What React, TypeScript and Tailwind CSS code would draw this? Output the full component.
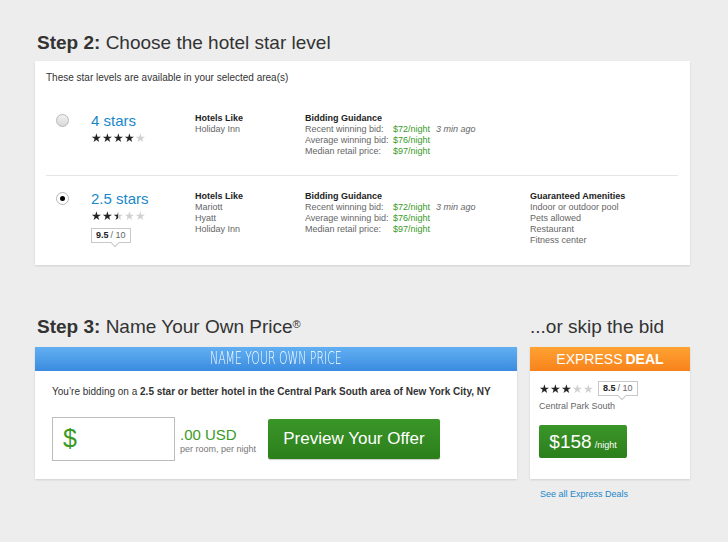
import React from "react";

const font = { fontFamily: '"Liberation Sans", Arial, sans-serif' };

function Stars({ value }: { value: number }) {
  return (
    <div className="flex h-[11px] items-center text-[12px] leading-none">
      {[0, 1, 2, 3, 4].map((i) => {
        const fill = Math.max(0, Math.min(1, value - i)) * 100;
        return (
          <span
            key={i}
            className="inline-block bg-clip-text text-transparent"
            style={{ backgroundImage: `linear-gradient(to right, #222 ${fill}%, #d0d0d0 ${fill}%)` }}
          >
            ★
          </span>
        );
      })}
    </div>
  );
}

function Score({ score }: { score: string }) {
  return (
    <div className="relative inline-flex h-[15px] items-center border border-[#c8c8c8] bg-white px-[4px] text-[9px] leading-none">
      <span className="font-bold text-[#222]">{score}</span>
      <span className="ml-[2px] text-[#666]">/ 10</span>
      <span className="absolute -bottom-[4px] left-[20px] h-[6px] w-[6px] rotate-45 border-b border-r border-[#c8c8c8] bg-white" />
    </div>
  );
}

function Radio({ checked }: { checked?: boolean }) {
  return (
    <div
      className={`flex h-[13px] w-[13px] items-center justify-center rounded-full border border-[#b8b8b8] ${
        checked ? "bg-white" : "bg-gradient-to-b from-[#f2f2f2] to-[#d8d8d8]"
      }`}
    >
      {checked ? <div className="h-[5px] w-[5px] rounded-full bg-black" /> : null}
    </div>
  );
}

function Guidance() {
  const rows = [
    ["Recent winning bid:", "$72/night", "3 min ago"],
    ["Average winning bid:", "$76/night", ""],
    ["Median retail price:", "$97/night", ""],
  ];
  return (
    <div className="text-[9px] leading-[11px]">
      <p className="font-bold text-[#222]">Bidding Guidance</p>
      {rows.map(([label, value, ago]) => (
        <div key={label} className="flex">
          <span className="w-[88px] text-[#666]">{label}</span>
          <span className="text-[#3a9a1f]">{value}</span>
          {ago ? <span className="ml-[6px] italic text-[#666]">{ago}</span> : null}
        </div>
      ))}
    </div>
  );
}

function StarRow({
  checked,
  label,
  value,
  hotels,
  score,
  amenities,
  className,
}: {
  checked?: boolean;
  label: string;
  value: number;
  hotels: string[];
  score?: string;
  amenities?: string[];
  className?: string;
}) {
  return (
    <div className={`grid grid-cols-[45px_104px_110px_225px_1fr] ${className ?? ""}`}>
      <div className="pl-[10px] pt-[1px]">
        <Radio checked={checked} />
      </div>
      <div>
        <p className="text-[15px] leading-[16px] text-[#1a87c9]">{label}</p>
        <div className="mt-[3px]">
          <Stars value={value} />
        </div>
        {score ? (
          <div className="mt-[7px] flex">
            <Score score={score} />
          </div>
        ) : null}
      </div>
      <div className="text-[9px] leading-[11px] text-[#666]">
        <p className="font-bold text-[#222]">Hotels Like</p>
        {hotels.map((h) => (
          <p key={h}>{h}</p>
        ))}
      </div>
      <div>
        <Guidance />
      </div>
      <div className="text-[9px] leading-[11px] text-[#666]">
        {amenities ? (
          <>
            <p className="font-bold text-[#222]">Guaranteed Amenities</p>
            {amenities.map((a) => (
              <p key={a}>{a}</p>
            ))}
          </>
        ) : null}
      </div>
    </div>
  );
}

export default function App() {
  return (
    <div className="min-h-[542px] w-[728px] bg-[#ededed] px-[35px] pt-[31px]" style={font}>
      <h2 className="pl-[2px] text-[19px] leading-[24px] text-[#333]">
        <span className="font-bold">Step 2:</span> Choose the hotel star level
      </h2>

      <section className="mt-[6px] h-[204px] w-[655px] bg-white px-[11px] pt-[10px] shadow-[0_1px_2px_rgba(0,0,0,0.12)]">
        <p className="text-[10px] leading-[13px] text-[#333]">These star levels are available in your selected area(s)</p>
        <div className="mr-[1px]">
          <StarRow
            className="h-[92px] border-b border-[#e6e6e6] pt-[29px]"
            label="4 stars"
            value={4}
            hotels={["Holiday Inn"]}
          />
          <StarRow
            className="pt-[15px]"
            checked
            label="2.5 stars"
            value={2.5}
            score="9.5"
            hotels={["Mariott", "Hyatt", "Holiday Inn"]}
            amenities={["Indoor or outdoor pool", "Pets allowed", "Restaurant", "Fitness center"]}
          />
        </div>
      </section>

      <div className="mt-[50px] flex gap-[13px]">
        <div className="w-[482px]">
          <h2 className="pl-[2px] text-[19px] leading-[24px] text-[#333]">
            <span className="font-bold">Step 3:</span> Name Your Own Price<sup className="text-[11px]">®</sup>
          </h2>
          <div className="mt-[8px] bg-white shadow-[0_1px_2px_rgba(0,0,0,0.12)]">
            <div className="flex h-[24px] items-center justify-center overflow-hidden bg-gradient-to-b from-[#62b0f2] to-[#3a8be0]">
              <span
                className="inline-block scale-x-[0.64] whitespace-nowrap text-[17px] text-white"
                style={{ fontFamily: '"DejaVu Sans", sans-serif', fontWeight: 300 }}
              >
                NAME YOUR OWN PRICE
              </span>
            </div>
            <div className="h-[108px] px-[17px] pt-[14px]">
              <p className="text-[10px] leading-[13px] text-[#333]">
                You’re bidding on a <b>2.5 star or better hotel in the Central Park South area of New York City, NY</b>
              </p>
              <div className="mt-[19px] flex items-start">
                <div className="flex h-[44px] w-[123px] items-center border border-[#bdbdbd] bg-white pl-[10px] text-[25px] text-[#3a9a1f]">
                  $
                </div>
                <div className="ml-[5px] w-[88px] pt-[10px]">
                  <p className="text-[15px] leading-[16px] text-[#3a9a1f]">.00 USD</p>
                  <p className="text-[9px] leading-[12px] text-[#777]">per room, per night</p>
                </div>
                <button className="mt-[2px] flex h-[40px] w-[172px] items-center justify-center rounded-[2px] bg-gradient-to-b from-[#3a9628] to-[#2c7f1c] text-[17px] text-white shadow-[0_1px_1px_rgba(0,0,0,0.2)]">
                  Preview Your Offer
                </button>
              </div>
            </div>
          </div>
        </div>

        <div className="w-[160px]">
          <h2 className="text-[19px] leading-[24px] text-[#333]">...or skip the bid</h2>
          <div className="mt-[8px] bg-white shadow-[0_1px_2px_rgba(0,0,0,0.12)]">
            <div className="flex h-[24px] items-center justify-center bg-gradient-to-b from-[#ffa232] to-[#f7821a] text-[14px] text-white">
              EXPRESS<span className="ml-[3px] font-bold">DEAL</span>
            </div>
            <div className="h-[108px] px-[9px] pt-[10px]">
              <div className="flex items-center gap-[4px]">
                <Stars value={3} />
                <Score score="8.5" />
              </div>
              <p className="mt-[5px] text-[9px] leading-[11px] text-[#666]">Central Park South</p>
              <button className="mt-[13px] flex h-[33px] w-[88px] items-end justify-center gap-[3px] rounded-[2px] bg-gradient-to-b from-[#3a9628] to-[#2c7f1c] pb-[7px] text-white">
                <span className="text-[19px] leading-[19px]">$158</span>
                <span className="text-[9px] leading-[12px]">/night</span>
              </button>
            </div>
          </div>
          <p className="mt-[9px] pl-[10px] text-[9px] text-[#1a87c9]">See all Express Deals</p>
        </div>
      </div>
    </div>
  );
}
